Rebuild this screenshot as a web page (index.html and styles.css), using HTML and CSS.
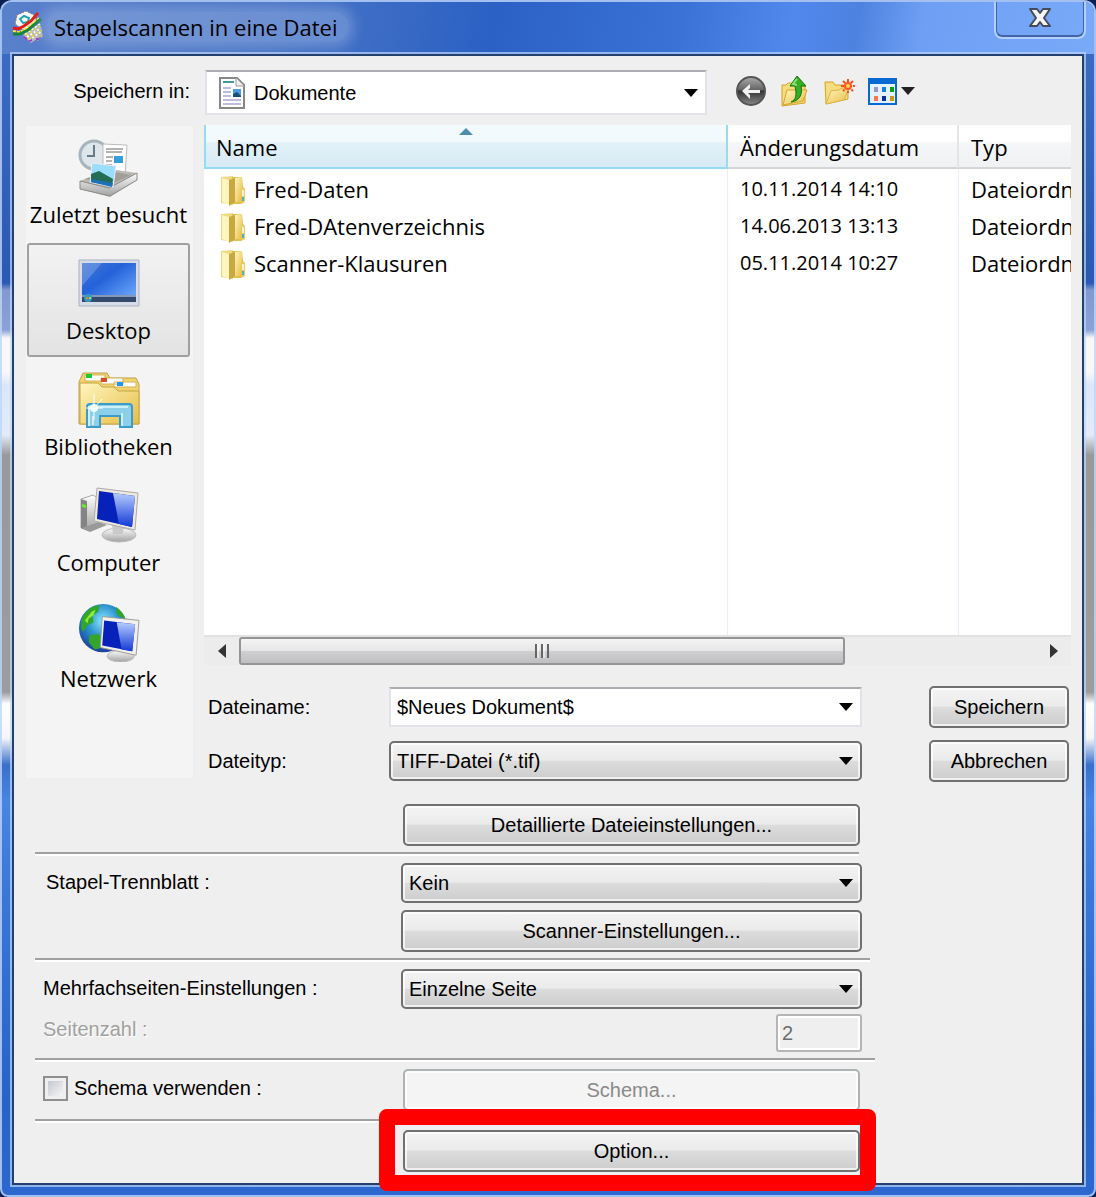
FILE: index.html
```
<!DOCTYPE html>
<html lang="de">

<head>
    <meta charset="UTF-8">
    <meta name="viewport" content="width=device-width, initial-scale=1.0">
    <title>Stapelscannen in eine Datei</title>
    <link rel="stylesheet" href="styles.css">
</head>

<body>
    <!-- Farbverläufe und Ordnersymbol, mehrfach benutzt -->
    <svg class="defs" width="0" height="0" aria-hidden="true">
        <defs>
            <linearGradient id="yellow" x1="0" y1="0" x2="1" y2="1">
                <stop offset="0" stop-color="#fff6c0" />
                <stop offset="1" stop-color="#e6bd45" />
            </linearGradient>
            <linearGradient id="blue" x1="0" y1="0" x2="1" y2="1">
                <stop offset="0" stop-color="#3f76d2" />
                <stop offset=".4" stop-color="#2462da" />
                <stop offset="1" stop-color="#76b2ff" />
            </linearGradient>
            <linearGradient id="screen" x1="0" y1="0" x2="0" y2="1">
                <stop offset="0" stop-color="#b6ccff" />
                <stop offset="1" stop-color="#1238d6" />
            </linearGradient>
            <linearGradient id="metal" x1="0" y1="0" x2="0" y2="1">
                <stop offset="0" stop-color="#fdfdfd" />
                <stop offset="1" stop-color="#a2a2a2" />
            </linearGradient>
            <linearGradient id="dark" x1="0" y1="0" x2="0" y2="1">
                <stop offset="0" stop-color="#aaa" />
                <stop offset=".45" stop-color="#666" />
                <stop offset=".5" stop-color="#333" />
                <stop offset="1" stop-color="#8a8a8a" />
            </linearGradient>
            <radialGradient id="earth" cx=".5" cy=".35" r=".65">
                <stop offset="0" stop-color="#8beaff" />
                <stop offset=".5" stop-color="#2c92cf" />
                <stop offset="1" stop-color="#1b3f9a" />
            </radialGradient>
            <symbol id="folder" viewBox="0 0 26 32">
                <path d="M1 2l12-1v29l-12-2z" fill="#edd983" />
                <path d="M12 2h10l1 10 2 2v13l-4 2h-9z" fill="#e0c04f" />
                <path d="M2 3l7 2v25l-7-3z" fill="#fff5bd" />
                <path d="M9 5l6-2v24l-6 4z" fill="#c9a83f" />
                <path d="M15 3l7-1v25h-7z" fill="url(#yellow)" />
                <path d="M22 13l3 1v13l-3 1z" fill="#e8cc64" />
                <path d="M23 15v6" stroke="#fff" stroke-width="1.5" />
                <path d="M23 22v4" stroke="#4cb3c4" stroke-width="2" />
            </symbol>
        </defs>
    </svg>

    <div class="window">
        <header class="titlebar">
            <svg class="app_icon" viewBox="0 0 32 32" width="32" height="32">
                <path d="M3 13L5 4l9-4 8 4 3 7-12 9z" fill="#f7f7f7" stroke="#777" stroke-dasharray="2 1" />
                <path d="M8 8l4-3 5 2-1 4-5 1z" fill="#fff" stroke="#1aa5b0" stroke-width="2" />
                <path d="M11 24l15-11 5 11-12 8z" fill="#b9b9b9" />
                <path d="M13 23l15-10M15 26l14-9M17 29l13-9" stroke="#fff" stroke-width="2" stroke-dasharray="2 2" />
                <path d="M14 24l15-9M16 28l14-9M25 29l5-4" stroke="#e5d72c" stroke-width="2" stroke-dasharray="2 3" />
                <path d="M12 26l3 2M17 30l3-1M24 28h3" stroke="#a53ad0" stroke-width="2" />
                <path d="M1 17l5 1 6-3 7-5 7-8" fill="none" stroke="#e51c16" stroke-width="3" />
                <path d="M1 20l6 1 7-3 13-11" fill="none" stroke="#ffe326" stroke-width="2" stroke-dasharray="3 1" />
                <path d="M1 23h7l8-4L29 8" fill="none" stroke="#17853a" stroke-width="3" />
            </svg>
            <h1 class="title">Stapelscannen in eine Datei</h1>
            <button type="button" class="close" aria-label="Schließen">
                <svg viewBox="0 0 22 20" width="22" height="20">
                    <path d="M1 1h7l3 4 3-4h7l-6 9 6 8h-7l-3-4-3 4H1l6-8z" fill="#f5f5f5" stroke="#474b57" stroke-width="2" stroke-linejoin="round" />
                </svg>
            </button>
        </header>

        <form class="client">
            <div class="lookin">
                <label for="folder_select">Speichern in:</label>
                <div class="folder_box">
                    <svg viewBox="0 0 26 32" width="26" height="32">
                        <path d="M1 1h17l7 7v23H1z" fill="#fff" stroke="#878787" stroke-width="2" />
                        <path d="M17 1v8h8" fill="#eee" stroke="#999" />
                        <path d="M4 5h11" stroke="#3e99a5" stroke-width="2" />
                        <path d="M4 11h8M4 15h8M4 19h8M4 23h18M4 27h18" stroke="#a9a8cf" stroke-width="1.5" />
                        <path d="M14 12h8v8h-8z" fill="#4d9be5" />
                        <path d="M14 20v-3l4-2 4 4v1z" fill="#174f75" />
                    </svg>
                    <select id="folder_select">
                        <option>Dokumente</option>
                    </select>
                </div>
                <div class="tools">
                    <button type="button" aria-label="Zurück">
                        <svg viewBox="0 0 32 32" width="32" height="32">
                            <circle cx="16" cy="16" r="14" fill="url(#dark)" stroke="#555" stroke-width="2" />
                            <path d="M7 16l8-7v4l-2 2h12v3H13l2 2v4z" fill="#f2f2f2" />
                        </svg>
                    </button>
                    <button type="button" aria-label="Übergeordneter Ordner">
                        <svg viewBox="0 0 32 32" width="32" height="32">
                            <path d="M3 10h4l2-2h6l2 3h9v17L3 31z" fill="#f5dc7d" stroke="#d4a326" />
                            <path d="M4 30L8 15h20l-4 11z" fill="url(#yellow)" stroke="#d6a52b" />
                            <path d="M12 27c5-2 6-7 4-16h-5l7-10 9 10h-5c2 9-2 15-10 16z" fill="#35ad24" stroke="#147511" />
                            <path d="M18 4l-4 5 4 1" fill="none" stroke="#8ce26f" stroke-width="2" />
                        </svg>
                    </button>
                    <button type="button" aria-label="Neuer Ordner">
                        <svg viewBox="0 0 32 32" width="32" height="32">
                            <path d="M2 7h8l2 3h13v14L3 29z" fill="#f5dc7d" stroke="#d4a326" />
                            <path d="M3 29l5-13 8-1 3-2h7l-5 12z" fill="url(#yellow)" stroke="#dfb441" />
                            <path d="M25 4v14M18 11h14M20 6l10 10M30 6l-10 10" stroke="#ff4a19" stroke-width="2" stroke-dasharray="3 1" />
                            <circle cx="25" cy="11" r="3" fill="#ffd65b" stroke="#ff5b22" stroke-width="2" />
                        </svg>
                    </button>
                    <button type="button" class="view" aria-label="Ansicht">
                        <svg viewBox="0 0 48 32" width="48" height="32">
                            <rect x="2" y="4" width="27" height="25" fill="#e4f1ff" stroke="#0869d3" stroke-width="2" />
                            <path d="M1 3h29v6H1z" fill="#0869d3" />
                            <path d="M7 12h4v5H7z" fill="#9b94c8" />
                            <path d="M15 12h4v5h-4z" fill="#147fe0" />
                            <path d="M23 12h4v5h-4z" fill="#109b17" />
                            <path d="M7 21h4v5H7z" fill="#ff744c" />
                            <path d="M15 21h4v5h-4z" fill="#0830a0" />
                            <path d="M23 21h4v5h-4z" fill="#c89807" />
                            <path d="M34 12h14l-7 8z" fill="#222" />
                        </svg>
                    </button>
                </div>
            </div>

            <div class="browser">
                <nav class="places">
                    <button type="button">
                        <svg viewBox="0 0 64 60" width="64" height="60">
                            <circle cx="17" cy="17" r="14" fill="#dce6eb" stroke="#a6b5bd" stroke-width="3" />
                            <path d="M17 7v11h-7" fill="none" stroke="#657b88" stroke-width="2" />
                            <path d="M26 6l24 1-2 32-22-4z" fill="#fff" stroke="#bbb" />
                            <path d="M29 11h17M29 14h16M29 19h7M29 23h6M29 27h6" stroke="#999" stroke-width="1.5" />
                            <path d="M37 18h9v7h-9z" fill="#379ed8" />
                            <path d="M3 43l29-12 28 4v7L33 59 3 51z" fill="#bbb8b4" />
                            <path d="M3 43l29 7 28-15v7L33 58 3 51z" fill="url(#metal)" stroke="#8e8a86" />
                            <path d="M8 41l24-8 22 4-22 10z" fill="#a19d99" />
                            <path d="M15 25l24 3-3 21-23-5z" fill="#9bddff" stroke="#eee" />
                            <path d="M14 36l8-3 14 8-1 7-21-4z" fill="#236d55" />
                            <path d="M14 41l22 4-1 4-21-5z" fill="#1e70b9" />
                        </svg>
                        Zuletzt besucht
                    </button>
                    <button type="button" class="active">
                        <svg viewBox="0 0 64 60" width="64" height="60">
                            <path d="M2 6h60v46H2z" fill="#d7dcea" stroke="#aab1c3" />
                            <path d="M5 9h54v39H5z" fill="url(#blue)" />
                            <path d="M5 9h20L5 32z" fill="#fff" opacity=".2" />
                            <path d="M5 41h54v7H5z" fill="#344b6e" />
                            <path d="M5 41h54v2H5z" fill="#8498b8" />
                            <circle cx="11" cy="44" r="4" fill="#349bbd" />
                            <path d="M9 43h2v2H9z" fill="#f17b2f" />
                            <path d="M12 43h2v2h-2z" fill="#a5df39" />
                        </svg>
                        Desktop
                    </button>
                    <button type="button">
                        <svg viewBox="0 0 64 60" width="64" height="60">
                            <path d="M2 12l4-9h24l3 5h26l3 6v40H2z" fill="#f0d36b" stroke="#c3a04d" />
                            <path d="M8 5h20v6H8zM24 8h22v6H24zM37 12h22v5H37z" fill="#fff" stroke="#d4b35a" />
                            <path d="M9 4h6v4H9z" fill="#18cc36" />
                            <path d="M24 8h6v4h-6z" fill="#d34d2d" />
                            <path d="M3 13h18l4 4h12l4 4h21v33H3z" fill="url(#yellow)" stroke="#c7a449" />
                            <path d="M40 12h6v4h-6z" fill="#2197f2" />
                            <path d="M10 57V37q0-3 3-3h39q3 0 3 3v20H43V46H23v11z" fill="#8bcfe9" stroke="#3c9bc8" stroke-width="2" />
                            <path d="M12 56V37h39M16 55V46M45 43v13" fill="none" stroke="#ccf0fb" stroke-width="2" />
                            <path d="M17 24v26M9 38h17M25 29l-8 9" stroke="#fff" />
                            <circle cx="17" cy="38" r="4" fill="#fff" opacity=".85" />
                        </svg>
                        Bibliotheken
                    </button>
                    <button type="button">
                        <svg viewBox="0 0 64 60" width="64" height="60">
                            <path d="M4 13l12-4 6 4v28l-10 4-8-3z" fill="url(#metal)" stroke="#aaa" />
                            <path d="M4 13l6 2v29l-6-2z" fill="#848484" />
                            <path d="M5 18l4 1v3l-4-1z" fill="#6dee20" />
                            <path d="M5 42l17-6 8 3-17 7z" fill="#999" />
                            <ellipse cx="42" cy="49" rx="17" ry="7" fill="url(#metal)" stroke="#bbb" />
                            <path d="M35 39h12l-1 9H36z" fill="#c9c9c9" />
                            <path d="M20 2l41 5-3 37-41-9z" fill="#eee9dc" stroke="#aaa" />
                            <path d="M22 5l36 5-3 31-35-8z" fill="#0721bb" />
                            <path d="M36 7l22 3-3 31-13-3z" fill="url(#screen)" />
                        </svg>
                        Computer
                    </button>
                    <button type="button">
                        <svg viewBox="0 0 64 62" width="64" height="60">
                            <circle cx="26" cy="27" r="25" fill="url(#earth)" />
                            <path d="M4 17Q9 5 22 3l-1 7-6 4 1 7-6 3-5 7-2-4zM12 34l9-1 5 6-4 9-5 1-6-8zM39 5q8 5 10 13l-9-5z" fill="#32a52b" />
                            <path d="M7 19l7-9 4-2-2 6-5 3-1 5z" fill="#8eea35" />
                            <ellipse cx="44" cy="56" rx="14" ry="6" fill="url(#metal)" stroke="#bbb" />
                            <path d="M25 15l38 4-3 36-37-8z" fill="#f2f0ed" stroke="#999" />
                            <path d="M27 19l32 4-3 28-31-6z" fill="#0721bb" />
                            <path d="M40 21l19 2-3 28-11-2z" fill="url(#screen)" />
                        </svg>
                        Netzwerk
                    </button>
                </nav>

                <div class="main">
                    <div class="list">
                        <table class="files">
                            <thead>
                                <tr>
                                    <th class="name">Name</th>
                                    <th class="date">Änderungsdatum</th>
                                    <th class="type">Typ</th>
                                </tr>
                            </thead>
                            <tbody>
                                <tr>
                                    <td><svg width="26" height="32"><use href="#folder" /></svg>Fred-Daten</td>
                                    <td class="time">10.11.2014 14:10</td>
                                    <td>Dateiordner</td>
                                </tr>
                                <tr>
                                    <td><svg width="26" height="32"><use href="#folder" /></svg>Fred-DAtenverzeichnis</td>
                                    <td class="time">14.06.2013 13:13</td>
                                    <td>Dateiordner</td>
                                </tr>
                                <tr>
                                    <td><svg width="26" height="32"><use href="#folder" /></svg>Scanner-Klausuren</td>
                                    <td class="time">05.11.2014 10:27</td>
                                    <td>Dateiordner</td>
                                </tr>
                                <tr class="rest">
                                    <td></td>
                                    <td></td>
                                    <td></td>
                                </tr>
                            </tbody>
                        </table>
                        <div class="scrollbar">
                            <button type="button" class="arrow" aria-label="Nach links">
                                <svg viewBox="0 0 8 14" width="8" height="14"><path d="M8 0v14L0 7z" fill="#333" /></svg>
                            </button>
                            <div class="track">
                                <div class="thumb">
                                    <svg viewBox="0 0 16 14" width="16" height="14"><path d="M2 0v14M8 0v14M14 0v14" stroke="#666" stroke-width="2" /><path d="M4 0v14M10 0v14" stroke="#fff" /></svg>
                                </div>
                            </div>
                            <button type="button" class="arrow" aria-label="Nach rechts">
                                <svg viewBox="0 0 8 14" width="8" height="14"><path d="M0 0v14l8-7z" fill="#333" /></svg>
                            </button>
                        </div>
                    </div>

                    <div class="fields">
                        <div class="field">
                            <label for="filename">Dateiname:</label>
                            <input type="text" id="filename" class="combo" value="$Neues Dokument$">
                        </div>
                        <div class="field">
                            <label for="filetype">Dateityp:</label>
                            <select id="filetype" class="drop">
                                <option>TIFF-Datei (*.tif)</option>
                            </select>
                        </div>
                        <div class="actions">
                            <button type="submit" class="btn">Speichern</button>
                            <button type="button" class="btn">Abbrechen</button>
                        </div>
                    </div>
                </div>
            </div>

            <div class="settings">
                <section class="group first">
                    <button type="button" class="btn inset">Detaillierte Dateieinstellungen...</button>
                </section>
                <section class="group short">
                    <label for="separator">Stapel-Trennblatt :</label>
                    <select id="separator" class="drop">
                        <option>Kein</option>
                    </select>
                    <button type="button" class="btn">Scanner-Einstellungen...</button>
                </section>
                <section class="group medium">
                    <label for="multipage">Mehrfachseiten-Einstellungen :</label>
                    <select id="multipage" class="drop">
                        <option>Einzelne Seite</option>
                    </select>
                    <label for="pages" class="disabled">Seitenzahl :</label>
                    <input type="text" id="pages" class="pages" value="2" disabled>
                </section>
                <section class="group schema">
                    <label class="check"><input type="checkbox">Schema verwenden :</label>
                    <button type="button" class="btn inset" disabled>Schema...</button>
                </section>
                <section class="group option">
                    <div class="marked">
                        <button type="button" class="btn inset">Option...</button>
                    </div>
                </section>
            </div>
        </form>
    </div>
</body>

</html>
```
FILE: styles.css
```
* {
    box-sizing: border-box;
    margin: 0;
    padding: 0;
}

body {
    background-color: #0b1f52;
    color: #000;
    font: 20px/30px "Liberation Sans", Arial, sans-serif;
}

button,
input,
select {
    color: inherit;
    font: inherit;
}

button {
    border: none;
    background: none;
}

svg {
    display: block;
    flex: none;
}

.defs {
    position: absolute;
}

/* Fensterrahmen */
.window {
    display: flex;
    flex-direction: column;
    min-height: 100vh;
    padding: 0 10px 10px;
    border: 2px solid rgba(190, 213, 250, .8);
    border-radius: 12px 12px 8px 8px;
    background: linear-gradient(#3f6fc8 0, #2a58b4 283px, #8199ce 290px, #8aa2d6 330px, #f8f8f8 338px, #f8f8f8 372px, #dbe6f8 385px, #e3ebf8 435px, #999 455px, #9c9c9c 692px, #fff 704px, #f6f6f6 738px, #3a70cc 765px, #4884e4 800px, #3a76d8 900px, #2762c8 1100px, #2d68d0 100%) border-box;
}

.titlebar {
    display: flex;
    align-items: center;
    height: 52px;
    flex: none;
    margin: 0 -10px;
    padding: 0 8px 3px 10px;
    border-radius: 10px 10px 0 0;
    background: linear-gradient(100deg, #5980cb 0, #4a75c6 25%, #2b61c4 45%, #3b72d6 62%, #5188ec 72%, #4d82e0 78%, #6e9ff4 84%, #79a9f8 100%);
}

.title {
    margin-left: 2px;
    padding: 0 12px 0 8px;
    border-radius: 20px;
    background-color: rgba(160, 184, 228, .4);
    box-shadow: 0 0 12px 6px rgba(160, 184, 228, .4);
    font: 22px/30px "Open Sans", "Noto Sans", sans-serif;
}

.close {
    display: flex;
    align-self: flex-start;
    align-items: center;
    justify-content: center;
    width: 92px;
    height: 37px;
    margin-left: auto;
    padding-bottom: 4px;
    border: 2px solid #b4cffb;
    border-top: none;
    border-radius: 0 0 8px 8px;
    box-shadow: inset 0 -1px 0 1px #4164a6;
}

/* Inhalt */
.client {
    flex: 1;
    padding: 14px 11px 9px 12px;
    border: 2px solid #24406f;
    background-color: #efefef;
    box-shadow: 0 0 0 2px rgba(190, 213, 250, .7);
}

.lookin {
    display: flex;
    align-items: center;
    height: 45px;
    margin-bottom: 10px;
}

.lookin label {
    width: 179px;
    padding: 0 15px 4px 0;
    text-align: right;
}

.folder_box {
    display: flex;
    flex: 0 1 502px;
    align-items: center;
    height: 45px;
    padding-left: 12px;
    border: 2px solid #e2e3ea;
    border-top-color: #abadb3;
    background-color: #fff;
}

.folder_box select {
    flex: 1;
    height: 38px;
    padding-left: 9px;
    border: none;
    appearance: none;
}

.folder_box select,
.combo,
.drop {
    background: url("data:image/svg+xml,%3Csvg xmlns='http://www.w3.org/2000/svg' width='14' height='8'%3E%3Cpath d='M0 0h14L7 8z'/%3E%3C/svg%3E") no-repeat right 7px center;
}

.tools {
    display: flex;
    gap: 12px;
    margin-left: 28px;
    padding-bottom: 4px;
}

.browser {
    display: flex;
    gap: 11px;
}

/* Orte */
.places {
    display: flex;
    flex: none;
    flex-direction: column;
    gap: 2px;
    width: 167px;
    margin-top: 1px;
    margin-bottom: 4px;
    padding: 1px 3px 1px 1px;
    background-color: #f4f4f4;
}

.places button {
    display: flex;
    flex-direction: column;
    align-items: center;
    height: 114px;
    padding-top: 9px;
    border: 2px solid transparent;
    border-radius: 3px;
    white-space: nowrap;
}

.places svg {
    margin-bottom: 1px;
}

.places .active {
    border-color: #a0a0a0;
    background-image: linear-gradient(#f2f2f2, #e3e3e3);
}

.places,
.places button,
.files {
    font: 22px/30px "Open Sans", "Noto Sans", sans-serif;
}

/* Dateiliste */
.main {
    flex: 1;
    min-width: 0;
}

.list {
    overflow: hidden;
    background-color: #fff;
}

.files {
    width: 904px;
    min-width: 100%;
    table-layout: fixed;
    border-collapse: separate;
    border-spacing: 0;
}

.files th {
    height: 44px;
    padding: 2px 12px 0;
    border-right: 2px solid #e3e5e8;
    border-bottom: 2px solid #d5d5d5;
    background: linear-gradient(#fff 40%, #f5f6f8 42%, #f0f1f3);
    font-weight: normal;
    text-align: left;
}

.files .name {
    width: 524px;
    padding-left: 10px;
    border: 2px solid #97daf5;
    border-top: none;
    background: url("data:image/svg+xml,%3Csvg xmlns='http://www.w3.org/2000/svg' width='14' height='7'%3E%3Cpath d='M7 0l7 7H0z' fill='%234f8fae'/%3E%3C/svg%3E") no-repeat center 3px, linear-gradient(#f2fafd 40%, #e2f1f8 42%, #d7eaf4);
}

.files .date {
    width: 231px;
}

.files .type {
    border-right: none;
}

.files td {
    height: 37px;
    padding: 0 12px 3px;
    border-right: 1px solid #e6effa;
    white-space: nowrap;
}

.files td:first-child {
    padding: 0 0 0 16px;
}

.files td:last-child {
    border-right: none;
}

.files tbody tr:first-child td {
    height: 40px;
    padding-top: 3px;
}

.files .time {
    font-size: 20px;
}

.files .rest td {
    height: 352px;
}

.files svg {
    display: inline-block;
    margin: -2px 8px 0 0;
    vertical-align: middle;
}

.scrollbar {
    display: flex;
    height: 30px;
    border-top: 2px solid #e2e2e2;
    background-color: #ececec;
}

.arrow {
    display: flex;
    align-items: center;
    justify-content: center;
    width: 35px;
}

.track {
    flex: 1;
}

.thumb {
    display: flex;
    align-items: center;
    justify-content: center;
    width: 76%;
    height: 28px;
    border: 2px solid #959595;
    border-radius: 3px;
    background: linear-gradient(#f4f4f4, #e6e6e6 48%, #cfcfd1 52%, #bfbfc2);
}

/* Dateiname und Dateityp */
.fields {
    display: grid;
    grid-template-columns: 658px auto;
    justify-content: space-between;
    row-gap: 12px;
    padding: 21px 2px 0 0;
}

.field {
    display: flex;
    align-items: center;
}

.field label {
    width: 185px;
    padding-left: 4px;
}

.combo,
.drop {
    height: 40px;
    padding: 0 6px;
}

.field .combo,
.field .drop {
    flex: 1;
    min-width: 0;
}

.combo {
    border: 2px solid #e2e3ea;
    border-top-color: #abadb3;
    background-color: #fff;
}

.drop,
.btn {
    border: 2px solid #707070;
    border-radius: 5px;
    background-color: #ddd;
    box-shadow: inset 0 0 0 2px rgba(255, 255, 255, .7);
}

.drop {
    appearance: none;
    background-image: url("data:image/svg+xml,%3Csvg xmlns='http://www.w3.org/2000/svg' width='14' height='8'%3E%3Cpath d='M0 0h14L7 8z'/%3E%3C/svg%3E"), linear-gradient(#f3f3f3, #ebebeb 48%, #dcdcdc 50%, #cdcdcd);
    background-position: right 7px center, 0 0;
}

.btn {
    height: 42px;
    background-image: linear-gradient(#f3f3f3, #ebebeb 48%, #dcdcdc 50%, #cdcdcd);
}

.btn:disabled {
    border-color: #adb2b5;
    background: #f4f4f4;
    color: #8a8a8a;
}

.actions {
    display: flex;
    flex-direction: column;
    grid-area: 1 / 2 / 3 / 3;
    gap: 12px;
    width: 140px;
}

/* Einstellungen */
.settings {
    width: 840px;
    margin-left: 9px;
}

.group {
    display: grid;
    grid-template-columns: 366px 461px;
    align-items: start;
    row-gap: 7px;
    padding: 9px 0 6px;
    border-top: 2px solid #a0a0a0;
    box-shadow: inset 0 2px #fff;
}

.group > .btn,
.marked {
    grid-column: 2;
}

.group label {
    padding: 4px 0 0 8px;
}

.inset {
    margin: 0 2px;
}

.first {
    padding-top: 22px;
    border-top: none;
    box-shadow: none;
}

.short {
    width: 824px;
}

.short label {
    padding-left: 11px;
}

.medium {
    row-gap: 5px;
    width: 835px;
}

.group .disabled {
    padding-top: 0;
    color: #a0a0a0;
    text-shadow: 1px 1px #fff;
}

.pages {
    justify-self: end;
    width: 86px;
    height: 38px;
    padding: 0 4px;
    border: 2px solid #b5b5b5;
    border-radius: 3px;
    background-color: #efefef;
    box-shadow: inset 0 0 0 2px #fff;
    color: #6d6d6d;
}

.schema {
    padding-bottom: 8px;
}

.check {
    display: flex;
    align-items: center;
    gap: 6px;
}

.check input {
    width: 25px;
    height: 25px;
    appearance: none;
    border: 2px solid #8e8f8f;
    background: linear-gradient(135deg, #c3c7cf, #f6f6f6) content-box #f4f4f4;
    padding: 3px;
}

.option {
    padding-bottom: 0;
}

.marked {
    position: relative;
    display: grid;
}

/* rote Markierung liegt über den Nachbarelementen */
.marked::after {
    content: "";
    position: absolute;
    inset: -21px -14px -19px -22px;
    border: 16px solid #f00;
    border-radius: 8px;
    pointer-events: none;
}
```
